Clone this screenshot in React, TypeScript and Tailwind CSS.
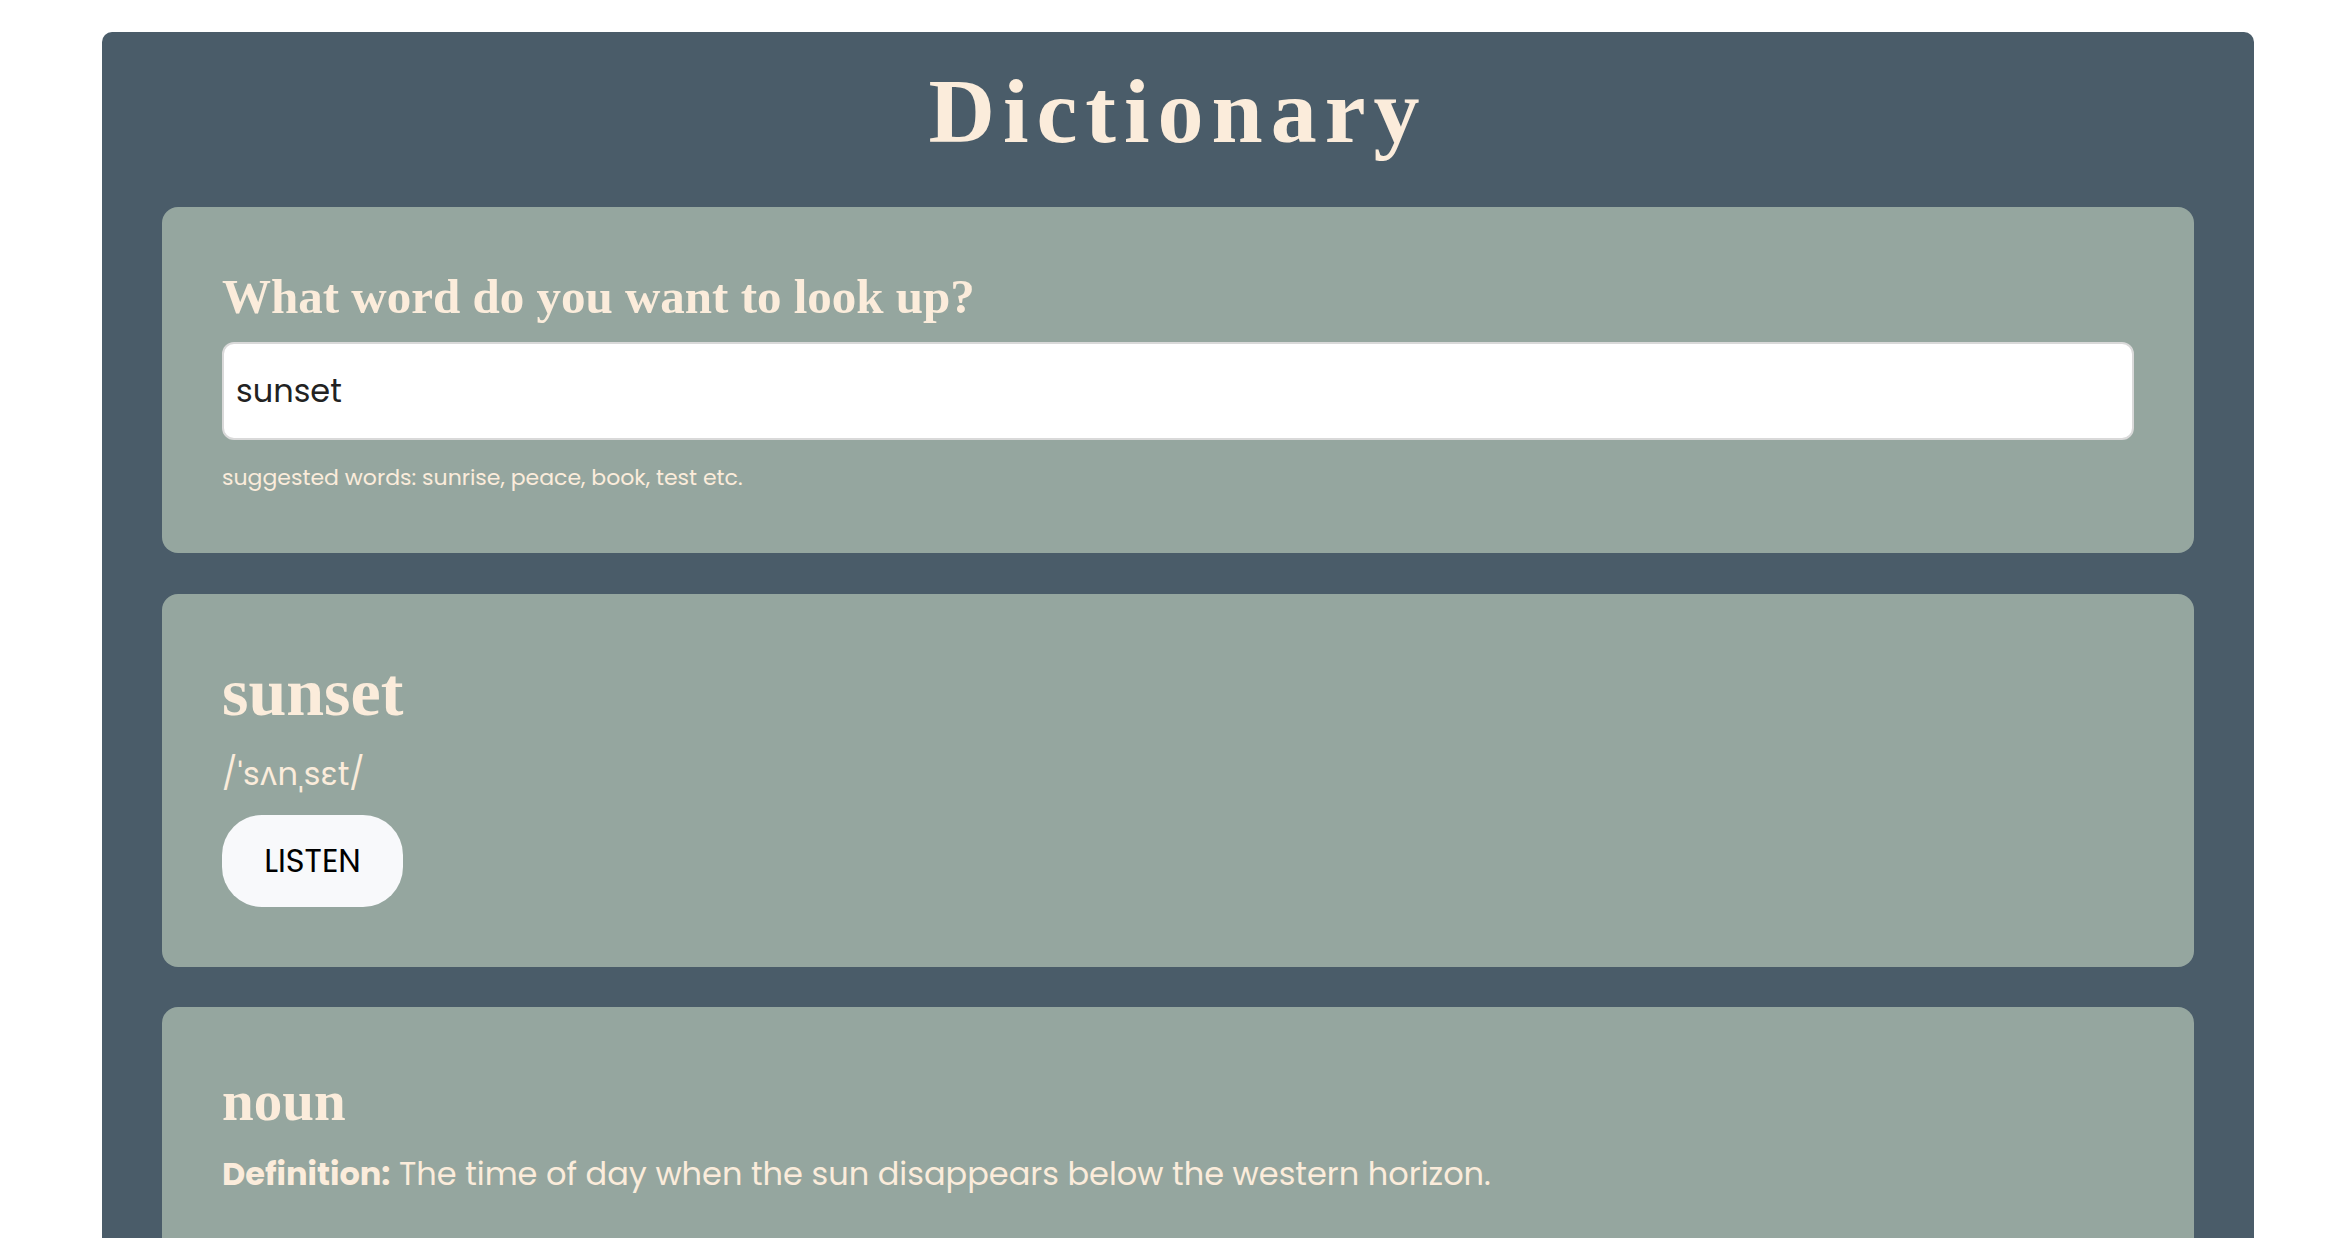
import React from "react";

const serif = { fontFamily: '"Liberation Serif", "DejaVu Serif", serif' };
const sans = { fontFamily: 'Poppins, Inter, "Noto Sans", sans-serif' };

export default function App() {
  return (
    <div className="min-h-[1238px] bg-white pt-[32px] pl-[102px]">
      <div className="w-[2152px] rounded-t-[10px] bg-[#4a5c69] px-[60px] pb-[60px] text-[#fbecdb]" style={sans}>
        <h1
          className="pt-[33px] text-center text-[92px] font-bold leading-none tracking-[8px] text-[#fbecdb]"
          style={serif}
        >
          Dictionary
        </h1>

        <section className="mt-[50px] rounded-[16px] bg-[#95a69f] px-[60px] pt-[65px] pb-[64px]">
          <h2 className="text-[49px] font-bold leading-none" style={serif}>
            What word do you want to look up?
          </h2>
          <div className="mt-[21px] flex h-[98px] items-center rounded-[12px] border-2 border-[#d9d9d9] bg-white pl-[12px]">
            <span className="text-[32px] leading-none text-[#222222]">sunset</span>
          </div>
          <p className="mt-[27px] text-[22px] leading-none text-[#fbecdb]">
            suggested words: sunrise, peace, book, test etc.
          </p>
        </section>

        <section className="mt-[41px] rounded-[16px] bg-[#95a69f] px-[60px] pt-[64px] pb-[60px]">
          <h2 className="text-[68px] font-bold leading-none" style={serif}>
            sunset
          </h2>
          <p className="mt-[32px] text-[32px] leading-none">/ˈsʌnˌsɛt/</p>
          <button className="mt-[25px] flex h-[92px] w-[181px] items-center justify-center rounded-[40px] bg-[#f8f9fb] text-[32px] leading-none text-black">
            LISTEN
          </button>
        </section>

        <section className="mt-[40px] rounded-[16px] bg-[#95a69f] px-[60px] pt-[65px] pb-[80px]">
          <h2 className="text-[57px] font-bold leading-none" style={serif}>
            noun
          </h2>
          <p className="mt-[29px] text-[32px] leading-none">
            <span className="font-bold">Definition:</span> The time of day when the sun disappears below the western horizon.
          </p>
        </section>
      </div>
    </div>
  );
}
